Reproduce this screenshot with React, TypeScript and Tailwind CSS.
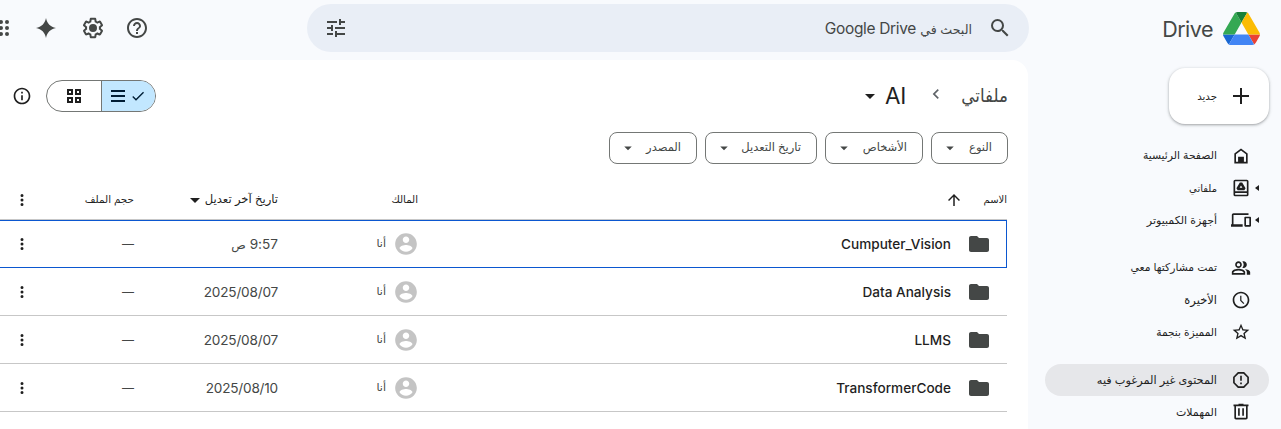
import type { ReactNode } from "react";
import clsx from "clsx";

type IconProps = { d: string; className?: string };

function Icon({ d, className }: IconProps) {
  return (
    <svg viewBox="0 0 24 24" fill="currentColor" className={clsx("shrink-0", className)}>
      <path fillRule="evenodd" d={d} />
    </svg>
  );
}

const paths = {
  search:
    "M15.5 14h-.79l-.28-.27A6.471 6.471 0 0 0 16 9.5 6.5 6.5 0 1 0 9.5 16c1.61 0 3.09-.59 4.23-1.57l.27.28v.79l5 4.99L20.49 19l-4.99-5zm-6 0C7.01 14 5 11.99 5 9.5S7.01 5 9.5 5 14 7.01 14 9.5 11.99 14 9.5 14z",
  tune: "M3 17v2h6v-2H3zM3 5v2h10V5H3zm10 16v-2h8v-2h-8v-2h-2v6h2zM7 9v2H3v2h4v2h2V9H7zm14 4v-2H11v2h10zm-6-4h2V7h4V5h-4V3h-2v6z",
  help: "M11 18h2v-2h-2v2zm1-16C6.48 2 2 6.48 2 12s4.48 10 10 10 10-4.48 10-10S17.52 2 12 2zm0 18c-4.41 0-8-3.59-8-8s3.59-8 8-8 8 3.59 8 8-3.59 8-8 8zm0-14c-2.21 0-4 1.79-4 4h2c0-1.1.9-2 2-2s2 .9 2 2c0 2-3 1.75-3 5h2c0-2.25 3-2.5 3-5 0-2.21-1.79-4-4-4z",
  gear: "M13.85 22.25h-3.7c-.74 0-1.36-.54-1.45-1.27l-.27-1.89c-.27-.14-.53-.29-.79-.46l-1.8.72c-.7.26-1.47-.03-1.81-.65L2.2 15.53c-.35-.66-.2-1.44.36-1.88l1.53-1.19c-.01-.15-.02-.3-.02-.46 0-.15.01-.31.02-.46l-1.52-1.19c-.59-.45-.74-1.26-.37-1.88l1.85-3.19c.34-.62 1.11-.9 1.79-.63l1.81.73c.26-.17.52-.32.78-.46l.27-1.91c.09-.7.71-1.25 1.44-1.25h3.7c.74 0 1.36.54 1.45 1.27l.27 1.89c.27.14.53.29.79.46l1.8-.72c.71-.26 1.48.03 1.82.65l1.84 3.18c.36.66.2 1.44-.36 1.88l-1.52 1.19c.01.15.02.3.02.46s-.01.31-.02.46l1.52 1.19c.56.45.72 1.23.37 1.86l-1.86 3.22c-.34.62-1.11.9-1.8.63l-1.8-.72c-.26.17-.52.32-.78.46l-.27 1.91c-.1.68-.72 1.22-1.46 1.22zm-3.23-2h2.76l.37-2.55.53-.22c.44-.18.88-.44 1.34-.78l.45-.34 2.38.96 1.38-2.4-2.03-1.58.07-.56c.03-.26.06-.51.06-.78s-.03-.53-.06-.78l-.07-.56 2.03-1.58-1.39-2.4-2.39.96-.45-.35c-.42-.32-.87-.58-1.33-.77l-.52-.22-.37-2.55h-2.76l-.37 2.55-.53.21c-.44.19-.88.44-1.34.79l-.45.33-2.38-.95-1.39 2.39 2.03 1.58-.07.56a7 7 0 0 0-.06.79c0 .26.02.53.06.78l.07.56-2.03 1.58 1.38 2.4 2.39-.96.45.35c.43.33.86.58 1.33.77l.53.22zM12 8a4 4 0 1 1 0 8 4 4 0 0 1 0-8z",
  spark: "M12 2c1.1 5.6 4.4 8.9 10 10-5.6 1.1-8.9 4.4-10 10-1.1-5.6-4.4-8.9-10-10 5.6-1.1 8.9-4.4 10-10z",
  apps: "M6 8a2 2 0 1 0 0-4 2 2 0 0 0 0 4zm6 0a2 2 0 1 0 0-4 2 2 0 0 0 0 4zm6 0a2 2 0 1 0 0-4 2 2 0 0 0 0 4zM6 14a2 2 0 1 0 0-4 2 2 0 0 0 0 4zm6 0a2 2 0 1 0 0-4 2 2 0 0 0 0 4zm6 0a2 2 0 1 0 0-4 2 2 0 0 0 0 4zM6 20a2 2 0 1 0 0-4 2 2 0 0 0 0 4zm6 0a2 2 0 1 0 0-4 2 2 0 0 0 0 4zm6 0a2 2 0 1 0 0-4 2 2 0 0 0 0 4z",
  info: "M11 7h2v2h-2zm0 4h2v6h-2zm1-9C6.48 2 2 6.48 2 12s4.48 10 10 10 10-4.48 10-10S17.52 2 12 2zm0 18c-4.41 0-8-3.59-8-8s3.59-8 8-8 8 3.59 8 8-3.59 8-8 8z",
  check: "M9 16.17 4.83 12l-1.42 1.41L9 19 21 7l-1.41-1.41z",
  down: "M7 10l5 5 5-5z",
  chevron: "M15.41 7.41 14 6l-6 6 6 6 1.41-1.41L10.83 12z",
  up: "M4 12l1.41 1.41L11 7.83V20h2V7.83l5.58 5.59L20 12l-8-8-8 8z",
  dots: "M12 8a2 2 0 1 0 0-4 2 2 0 0 0 0 4zm0 6a2 2 0 1 0 0-4 2 2 0 0 0 0 4zm0 6a2 2 0 1 0 0-4 2 2 0 0 0 0 4z",
  folder: "M10 4H4c-1.1 0-2 .9-2 2v12c0 1.1.9 2 2 2h16c1.1 0 2-.9 2-2V8c0-1.1-.9-2-2-2h-8l-2-2z",
  person:
    "M12 2C6.48 2 2 6.48 2 12s4.48 10 10 10 10-4.48 10-10S17.52 2 12 2zm0 3c1.66 0 3 1.34 3 3s-1.34 3-3 3-3-1.34-3-3 1.34-3 3-3zm0 14.2c-2.5 0-4.71-1.28-6-3.22.03-1.99 4-3.08 6-3.08 1.99 0 5.97 1.09 6 3.08-1.29 1.94-3.5 3.22-6 3.22z",
  home: "M12 3 4 9v12h16V9l-8-6zM6 10l6-4.5 6 4.5v9h-2.5v-6h-7v6H6v-9z",
  drive:
    "M5 2h14a2 2 0 0 1 2 2v16a2 2 0 0 1-2 2H5a2 2 0 0 1-2-2V4a2 2 0 0 1 2-2zm0 2v12h14V4H5zm0 14v2h14v-2H5zM10.6 5.5h2.8l4.1 6.8-1.5 2.5H8l-1.5-2.5 4.1-6.8zM12 9l-1.7 2.8h3.4L12 9z",
  devices:
    "M3 6h18V4H3c-1.1 0-2 .9-2 2v11H0v3h14v-3H3V6zm20 2h-6c-.55 0-1 .45-1 1v10c0 .55.45 1 1 1h6c.55 0 1-.45 1-1V9c0-.55-.45-1-1-1zm-1 10h-4v-8h4v8z",
  people:
    "M9 12c2.21 0 4-1.79 4-4s-1.79-4-4-4-4 1.79-4 4 1.79 4 4 4zm0-6c1.1 0 2 .9 2 2s-.9 2-2 2-2-.9-2-2 .9-2 2-2zm0 7c-2.67 0-8 1.34-8 4v3h16v-3c0-2.66-5.33-4-8-4zm6 5H3v-.99C3.2 16.29 6.3 15 9 15s5.8 1.29 6 2v1zM15 12c2.21 0 4-1.79 4-4s-1.79-4-4-4c-.47 0-.91.1-1.33.24a5.98 5.98 0 0 1 0 7.52c.42.14.86.24 1.33.24zm1.67 1.13C18.04 14.06 19 15.32 19 17v3h4v-3c0-2.18-3.57-3.47-6.33-3.87z",
  clock:
    "M11.99 2C6.47 2 2 6.48 2 12s4.47 10 9.99 10C17.52 22 22 17.52 22 12S17.52 2 11.99 2zM12 20c-4.42 0-8-3.58-8-8s3.58-8 8-8 8 3.58 8 8-3.58 8-8 8zm.5-13H11v6l3.9 3.9 1.1-1.1-3.5-3.5z",
  star: "M22 9.24l-7.19-.62L12 2 9.19 8.63 2 9.24l5.46 4.73L5.82 21 12 17.27 18.18 21l-1.63-7.03L22 9.24zM12 15.4l-3.76 2.27 1-4.28-3.32-2.88 4.38-.38L12 6.1l1.71 4.04 4.38.38-3.32 2.88 1 4.28L12 15.4z",
  spam: "M8.3 2.5h7.4l5.8 5.8v7.4l-5.8 5.8H8.3l-5.8-5.8V8.3l5.8-5.8zm.8 2L4.5 9.1v5.8l4.6 4.6h5.8l4.6-4.6V9.1l-4.6-4.6H9.1zM11 7h2v6h-2zm0 8h2v2h-2z",
  trash: "M15 3V2H9v1H3v2h1v14c0 1.1.9 2 2 2h12c1.1 0 2-.9 2-2V5h1V3h-6zm3 16H6V5h12v14zM8.5 7.5h2v9h-2zm5 0h2v9h-2z",
};

function DriveLogo() {
  return (
    <svg viewBox="0 0 87.3 78" className="h-[33px] w-[37px] shrink-0">
      <path fill="#1967d2" d="m6.6 66.85 3.85 6.65c.8 1.4 1.95 2.5 3.3 3.3l13.75-23.8h-27.5c0 1.55.4 3.1 1.2 4.5z" />
      <path fill="#34a853" d="m43.65 25-13.75-23.8c-1.35.8-2.5 1.9-3.3 3.3l-25.4 44a9.06 9.06 0 0 0 -1.2 4.5h27.5z" />
      <path fill="#ea4335" d="m73.55 76.8c1.35-.8 2.5-1.9 3.3-3.3l1.6-2.75 7.65-13.25c.8-1.4 1.2-2.95 1.2-4.5h-27.5z" />
      <path fill="#188038" d="m43.65 25 13.75-23.8c-1.35-.8-2.9-1.2-4.5-1.2h-18.5c-1.6 0-3.15.45-4.5 1.2z" />
      <path fill="#4285f4" d="m59.8 53h-32.3l-13.75 23.8c1.35.8 2.9 1.2 4.5 1.2h50.8c1.6 0 3.15-.45 4.5-1.2z" />
      <path fill="#fbbc04" d="m73.4 26.5-12.7-22c-.8-1.4-1.95-2.5-3.3-3.3l-13.75 23.8 16.15 28h27.45c0-1.55-.4-3.1-1.2-4.5z" />
    </svg>
  );
}

const navGroups = [
  [
    { label: "الصفحة الرئيسية", icon: paths.home, size: "text-[10.8px]" },
    { label: "ملفاتي", icon: paths.drive, size: "text-[10px]", expandable: true },
    { label: "أجهزة الكمبيوتر", icon: paths.devices, size: "text-[11px]", expandable: true },
  ],
  [
    { label: "تمت مشاركتها معي", icon: paths.people, size: "text-[10.8px]" },
    { label: "الأخيرة", icon: paths.clock, size: "text-[11.5px]" },
    { label: "المميزة بنجمة", icon: paths.star, size: "text-[10.6px]" },
  ],
  [
    { label: "المحتوى غير المرغوب فيه", icon: paths.spam, size: "text-[11.3px]", active: true },
    { label: "المهملات", icon: paths.trash, size: "text-[11px]" },
  ],
];

const filters = [
  { label: "النوع", width: "w-[77px]" },
  { label: "الأشخاص", width: "w-[98px]" },
  { label: "تاريخ التعديل", width: "w-28" },
  { label: "المصدر", width: "w-[88px]" },
];

const files = [
  { name: "Cumputer_Vision", date: "9:57", period: "ص", selected: true },
  { name: "Data Analysis", date: "2025/08/07" },
  { name: "LLMS", date: "2025/08/07" },
  { name: "TransformerCode", date: "2025/08/10" },
];

function Cells({ children, className }: { children: ReactNode; className?: string }) {
  return (
    <div className={clsx("grid grid-cols-[589px_140px_144px_100px_24px] items-center", className)}>{children}</div>
  );
}

function Sidebar() {
  return (
    <aside className="w-[253px] shrink-0 pr-3 pl-[17px]">
      <div className="flex h-[60px] items-center gap-2.5 pr-[9px] pb-1">
        <DriveLogo />
        <span className="pt-0.5 text-[21.5px] tracking-[-0.5px] text-[#444746]">Drive</span>
      </div>
      <button className="mt-2 flex h-14 w-[100px] items-center gap-3 rounded-2xl bg-white pr-4 shadow-[0_1px_2px_rgba(60,64,67,0.3),0_1px_3px_1px_rgba(60,64,67,0.15)]">
        <svg viewBox="0 0 24 24" className="size-6 shrink-0">
          <path d="M12 4v16M4 12h16" stroke="currentColor" strokeWidth="2" />
        </svg>
        <span className="pt-px text-[10.2px]">جديد</span>
      </button>
      <nav className="mt-4 space-y-4">
        {navGroups.map((group, i) => (
          <div key={i}>
            {group.map((item) => (
              <div
                key={item.label}
                className={clsx("flex h-8 items-center rounded-full", "active" in item && item.active && "bg-[#e6e7ea]")}
              >
                <span className="flex w-[18px] justify-center pr-1.5">
                  {"expandable" in item && item.expandable && (
                    <svg viewBox="0 0 4 6" className="h-1.5 w-1 shrink-0" fill="currentColor">
                      <path d="M4 0v6L0 3z" />
                    </svg>
                  )}
                </span>
                <Icon d={item.icon} className="size-5" />
                <span className={clsx("mr-3.5 pt-px whitespace-nowrap", item.size)}>{item.label}</span>
              </div>
            ))}
          </div>
        ))}
      </nav>
    </aside>
  );
}

function TopBar() {
  return (
    <header className="flex h-[60px] items-start pt-1 text-[#444746]">
      <div className="-mr-px flex h-12 w-[722px] shrink-0 items-center rounded-full bg-[#e9eef6] pr-[17px] pl-[17px]">
        <Icon d={paths.search} className="size-6" />
        <span className="mr-4 pt-px text-[15.5px] tracking-[-0.35px]">
          <span className="text-[12.6px] tracking-normal">البحث في</span> Google Drive
        </span>
        <Icon d={paths.tune} className="mr-auto size-6" />
      </div>
      <div className="mr-[158px] flex h-12 items-center">
        <Icon d={paths.help} className="size-6" />
        <Icon d={paths.gear} className="mr-5 size-6" />
        <Icon d={paths.spark} className="mr-[23px] size-6" />
        <Icon d={paths.apps} className="mr-[21px] size-6" />
      </div>
    </header>
  );
}

function Toolbar() {
  return (
    <div className="-mr-px flex h-8 items-center">
      <span className="w-[46px] shrink-0 text-[19px] whitespace-nowrap text-[#444746]">
        <span className="inline-block origin-right scale-x-[0.88]">ملفاتي</span>
      </span>
      <Icon d={paths.chevron} className="mr-4 size-5 -translate-y-0.5 text-[#5f6368]" />
      <span className="mr-5 text-[22.5px] tracking-[-0.3px]">AI</span>
      <Icon d={paths.down} className="mr-[3px] size-6" />
      <div className="mr-auto ml-3.5 flex h-8 w-[110px] overflow-hidden rounded-full border border-[#747775]">
        <div className="flex w-[54px] items-center justify-center gap-[5px] border-l border-[#747775] bg-[#c2e7ff] text-[#001d35]">
          <Icon d={paths.check} className="size-4" />
          <svg viewBox="0 0 14 12" className="h-3 w-3.5 shrink-0" fill="currentColor">
            <path d="M0 0h14v2H0zM0 5h14v2H0zM0 10h14v2H0z" />
          </svg>
        </div>
        <div className="flex flex-1 items-center justify-center">
          <svg viewBox="0 0 14 14" className="size-3.5 shrink-0" fill="none" stroke="currentColor" strokeWidth="2">
            <path d="M1 1h4v4H1zM9 1h4v4H9zM1 9h4v4H1zM9 9h4v4H9z" />
          </svg>
        </div>
      </div>
      <Icon d={paths.info} className="ml-3 size-5" />
    </div>
  );
}

function FileTable() {
  return (
    <div className="mt-4">
      <Cells className="h-10 border-b border-[#c7c7c7]">
        <div className="flex items-center text-[10px]">
          الاسم
          <Icon d={paths.up} className="mr-5 size-[18px]" />
        </div>
        <div className="pt-px text-[10.2px]">المالك</div>
        <div className="flex items-center pt-px text-[11.6px] whitespace-nowrap">
          تاريخ آخر تعديل
          <Icon d={paths.down} className="-mr-0.5 size-6" />
        </div>
        <div className="pt-px text-[10.4px]">حجم الملف</div>
        <Icon d={paths.dots} className="mx-auto size-[18px]" />
      </Cells>
      {files.map((file) => (
        <div
          key={file.name}
          className={clsx("relative h-12 border-b", file.selected ? "border-[#0b57d0]" : "border-[#c7c7c7]")}
        >
          {file.selected && <div className="absolute inset-0 border-t border-r border-[#0b57d0]" />}
          <Cells className="h-full text-[13.6px] text-[#444746]">
            <div className="flex items-center pr-4">
              <Icon d={paths.folder} className="size-6" />
              <span className="mr-4 pt-px font-medium text-[#1f1f1f]">{file.name}</span>
            </div>
            <div className="flex items-center">
              <Icon d={paths.person} className="-mr-px size-[26px] text-[#c4c4c4]" />
              <span className="mr-[7px] text-[11px]">أنا</span>
            </div>
            <div className="pt-px tracking-[-0.2px]">
              {file.date}
              {file.period && <span className="mr-1 text-[12px] tracking-normal">{file.period}</span>}
            </div>
            <div className="pt-px text-[12px]">—</div>
            <Icon d={paths.dots} className="mx-auto size-[18px] text-[#1f1f1f]" />
          </Cells>
        </div>
      ))}
    </div>
  );
}

export default function App() {
  return (
    <div
      dir="rtl"
      className="flex h-[429px] w-[1281px] overflow-hidden bg-[#f8fafd] font-['Inter','DejaVu_Sans',sans-serif] text-[#1f1f1f]"
    >
      <Sidebar />
      <div className="w-[1028px] shrink-0">
        <TopBar />
        <main className="h-[369px] rounded-tr-2xl bg-white pt-5 pr-[21px]">
          <Toolbar />
          <div className="mt-5 -mr-px flex gap-2">
            {filters.map((filter) => (
              <button
                key={filter.label}
                className={clsx(
                  "flex h-8 shrink-0 items-center justify-between rounded-lg border border-[#747775] pr-[15px] pl-[9px] text-[11.5px] text-[#444746]",
                  filter.width
                )}
              >
                {filter.label}
                <Icon d={paths.down} className="size-[18px]" />
              </button>
            ))}
          </div>
          <FileTable />
        </main>
      </div>
    </div>
  );
}
